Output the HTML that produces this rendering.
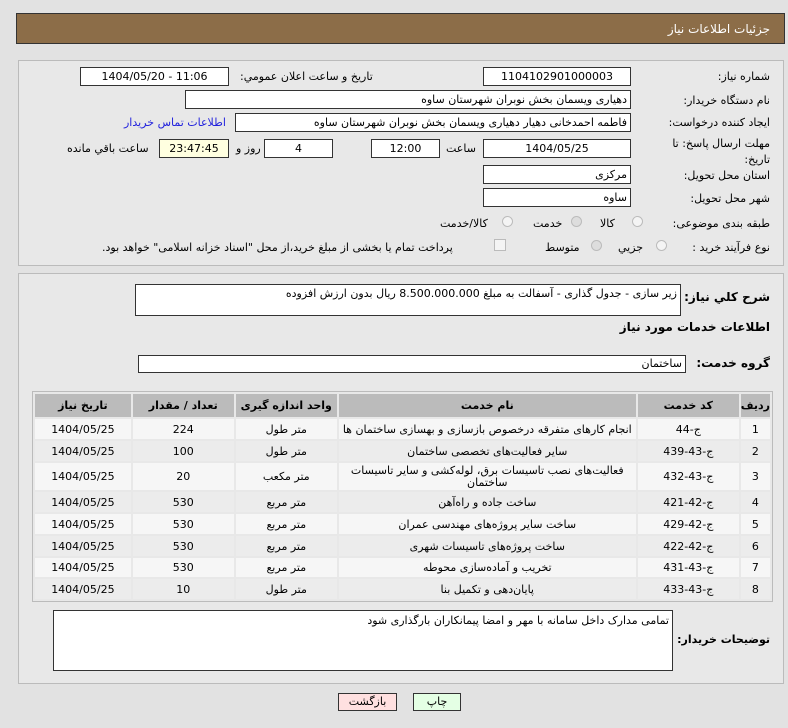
<!DOCTYPE html>
<html><head><meta charset="utf-8"><style>
*{margin:0;padding:0;box-sizing:border-box}
body{width:788px;height:728px;background:#e2e2e2;font-family:"DejaVu Sans",sans-serif;font-size:11px;color:#000;position:relative;overflow:hidden;direction:rtl}
.a{position:absolute}
.hdr{left:16px;top:13px;width:769px;height:31px;background:#8c6d48;border:1px solid #333}
.hdr span{position:absolute;right:14px;top:8px;color:#fff;font-size:12px}
.panel{border:1px solid #bbb;background:#e8e8e8}
.in{position:absolute;background:#fff;border:1px solid #333;height:19px;font-size:11px;line-height:17px;padding:0 3px;white-space:nowrap;overflow:hidden}
.c{text-align:center}
.ltr{direction:ltr}
.lb{position:absolute;white-space:nowrap;font-size:11px;z-index:2}
.b{font-weight:bold;font-size:12px}
.rd{position:absolute;width:11px;height:11px;border-radius:50%;border:1px solid #bbb;background:#f4f4f4}
table{position:absolute;left:32px;top:391px;width:741px;border-collapse:separate;border-spacing:2px;background:#e8e8e8;border:1px solid #bbb}
th{background:#bbb;font-size:11px;height:23px;font-weight:bold}
td{text-align:center;font-size:11px;background:#f6f6f6;padding:0}
tr:nth-child(odd) td{background:#ececec}
.btn{position:absolute;height:18px;border:1px solid #333;text-align:center;font-size:11px;line-height:16px}
</style></head><body>
<div class="a hdr"><span>جزئیات اطلاعات نیاز</span></div>
<div class="a panel" style="left:18px;top:60px;width:766px;height:206px"></div>
<div class="a panel" style="left:18px;top:273px;width:766px;height:411px"></div>

<div class="lb" style="right:18px;top:70px">شماره نیاز:</div>
<div class="in c" style="left:483px;top:67px;width:148px">1104102901000003</div>
<div class="lb" style="left:240px;top:70px">تاریخ و ساعت اعلان عمومي:</div>
<div class="in c ltr" style="left:80px;top:67px;width:149px">1404/05/20 - 11:06</div>

<div class="lb" style="right:18px;top:94px">نام دستگاه خریدار:</div>
<div class="in" style="left:185px;top:90px;width:446px">دهیاری ویسمان  بخش نوبران شهرستان ساوه</div>

<div class="lb" style="right:18px;top:116px">ایجاد کننده درخواست:</div>
<div class="in" style="left:235px;top:113px;width:396px">فاطمه احمدخانی دهیار دهیاری ویسمان  بخش نوبران شهرستان ساوه</div>
<div class="lb" style="left:124px;top:116px;color:#2222dd">اطلاعات تماس خریدار</div>

<div class="lb" style="right:18px;top:136px;line-height:16px">مهلت ارسال پاسخ: تا<br>تاریخ:</div>
<div class="in c" style="left:483px;top:139px;width:148px">1404/05/25</div>
<div class="lb" style="left:446px;top:142px">ساعت</div>
<div class="in c" style="left:371px;top:139px;width:69px">12:00</div>
<div class="in c" style="left:264px;top:139px;width:69px">4</div>
<div class="lb" style="left:236px;top:142px">روز و</div>
<div class="in c" style="left:159px;top:139px;width:70px;background:#ffffe0">23:47:45</div>
<div class="lb" style="left:67px;top:142px">ساعت باقي مانده</div>

<div class="lb" style="right:18px;top:169px">استان محل تحویل:</div>
<div class="in" style="left:483px;top:165px;width:148px">مرکزی</div>
<div class="lb" style="right:18px;top:192px">شهر محل تحویل:</div>
<div class="in" style="left:483px;top:188px;width:148px">ساوه</div>

<div class="lb" style="right:18px;top:217px">طبقه بندی موضوعی:</div>
<div class="rd" style="left:632px;top:216px"></div><div class="lb" style="left:600px;top:217px">کالا</div>
<div class="rd" style="left:571px;top:216px;background:#ddd"></div><div class="lb" style="left:533px;top:217px">خدمت</div>
<div class="rd" style="left:502px;top:216px"></div><div class="lb" style="left:440px;top:217px">کالا/خدمت</div>

<div class="lb" style="right:18px;top:241px">نوع فرآیند خرید :</div>
<div class="rd" style="left:656px;top:240px"></div><div class="lb" style="left:618px;top:241px">جزیي</div>
<div class="rd" style="left:591px;top:240px;background:#ddd"></div><div class="lb" style="left:545px;top:241px">متوسط</div>
<div class="a" style="left:494px;top:239px;width:12px;height:12px;border:1px solid #bbb;background:#f4f4f4"></div>
<div class="lb" style="left:102px;top:241px">پرداخت تمام یا بخشی از مبلغ خرید،از محل "اسناد خزانه اسلامی" خواهد بود.</div>

<div class="lb b" style="right:18px;top:290px">شرح کلي نیاز:</div>
<div class="in" style="left:135px;top:284px;width:546px;height:32px">زیر سازی - جدول گذاری - آسفالت به مبلغ 8.500.000.000 ریال بدون ارزش افزوده</div>
<div class="lb b" style="right:18px;top:320px">اطلاعات خدمات مورد نیاز</div>
<div class="lb b" style="right:18px;top:356px">گروه خدمت:</div>
<div class="in" style="left:138px;top:355px;width:548px;height:18px;line-height:16px">ساختمان</div>

<table>
<tr><th style="width:26px">ردیف</th><th style="width:101px">کد خدمت</th><th style="width:297px">نام خدمت</th><th style="width:101px">واحد اندازه گیری</th><th style="width:101px">تعداد / مقدار</th><th>تاریخ نیاز</th></tr>
<tr style="height:20px"><td>1</td><td>ج-44</td><td>انجام کارهای متفرقه درخصوص بازسازی و بهسازی ساختمان ها</td><td>متر طول</td><td>224</td><td>1404/05/25</td></tr>
<tr style="height:20px"><td>2</td><td>ج-43-439</td><td>سایر فعالیت‌های تخصصی ساختمان</td><td>متر طول</td><td>100</td><td>1404/05/25</td></tr>
<tr style="height:27px"><td>3</td><td>ج-43-432</td><td style="line-height:12px">فعالیت‌های نصب تاسیسات برق، لوله‌کشی و سایر تاسیسات ساختمان</td><td>متر مکعب</td><td>20</td><td>1404/05/25</td></tr>
<tr style="height:20px"><td>4</td><td>ج-42-421</td><td>ساخت جاده و راه‌آهن</td><td>متر مربع</td><td>530</td><td>1404/05/25</td></tr>
<tr style="height:20px"><td>5</td><td>ج-42-429</td><td>ساخت سایر پروژه‌های مهندسی عمران</td><td>متر مربع</td><td>530</td><td>1404/05/25</td></tr>
<tr style="height:20px"><td>6</td><td>ج-42-422</td><td>ساخت پروژه‌های تاسیسات شهری</td><td>متر مربع</td><td>530</td><td>1404/05/25</td></tr>
<tr style="height:19px"><td>7</td><td>ج-43-431</td><td>تخریب و آماده‌سازی محوطه</td><td>متر مربع</td><td>530</td><td>1404/05/25</td></tr>
<tr style="height:20px"><td>8</td><td>ج-43-433</td><td>پایان‌دهی و تکمیل بنا</td><td>متر طول</td><td>10</td><td>1404/05/25</td></tr>
</table>

<div class="lb b" style="right:18px;top:633px;font-size:11px">توضیحات خریدار:</div>
<div class="in" style="left:53px;top:610px;width:620px;height:61px;line-height:20px">تمامی مدارک داخل سامانه با مهر و امضا پیمانکاران بارگذاری شود</div>

<div class="btn" style="left:338px;top:693px;width:59px;background:#ffe0e0">بازگشت</div>
<div class="btn" style="left:413px;top:693px;width:48px;background:#e4ffe4">چاپ</div>
</body></html>
